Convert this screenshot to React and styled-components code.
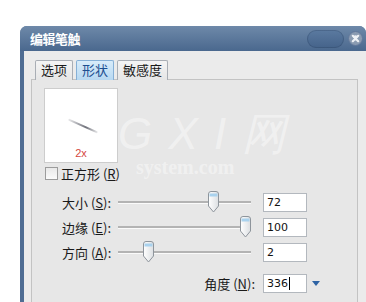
import React from 'react'
import styled, { createGlobalStyle } from 'styled-components'

const GlobalStyle = createGlobalStyle`
  html, body {
    margin: 0;
    padding: 0;
    background: #ffffff;
    overflow: hidden;
  }
  body {
    font-family: "Noto Sans CJK SC", "DejaVu Sans", sans-serif;
  }
`

const rows = [
  { label: '大小', key: 'S', value: '72', thumb: 90 },
  { label: '边缘', key: 'E', value: '100', thumb: 122 },
  { label: '方向', key: 'A', value: '2', thumb: 25 },
]

const tabs = ['选项', '形状', '敏感度']

function Thumb() {
  return (
    <svg width="11" height="22" viewBox="0 0 11 22">
      <defs>
        <linearGradient id="tg" x1="0" x2="1" y1="0" y2="0">
          <stop offset="0" stopColor="#ffffff" />
          <stop offset="1" stopColor="#dcdfe2" />
        </linearGradient>
      </defs>
      <path d="M0.5 3 Q0.5 0.5 3 0.5 H8 Q10.5 0.5 10.5 3 V15 L5.5 21 L0.5 15 Z" fill="url(#tg)" stroke="#8e959c" />
      <rect x="1.5" y="2.5" width="8" height="3" fill="#a9d2ee" />
    </svg>
  )
}

function CloseIcon() {
  return (
    <svg width="15" height="15" viewBox="0 0 15 15">
      <circle cx="7.5" cy="7.5" r="7" fill="#8a9bb1" stroke="#61779a" />
      <path d="M4.8 4.8 L10.2 10.2 M10.2 4.8 L4.8 10.2" stroke="#eef1f5" strokeWidth="2.2" strokeLinecap="round" />
      <circle cx="7.5" cy="6.2" r="2" fill="#eef1f5" />
    </svg>
  )
}

export default function App() {
  return (
    <Page>
      <GlobalStyle />
      <Window>
        <TitleBar>
          <Title>编辑笔触</Title>
          <TitleButtons>
            <Pill />
            <CloseIcon />
          </TitleButtons>
        </TitleBar>
        <Body>
          <TabStrip>
            {tabs.map((t, i) => (
              <Tab key={t} $active={i === 1}>{t}</Tab>
            ))}
          </TabStrip>
          <Panel>
            <Watermark>
              <WatermarkBig>G X I 网</WatermarkBig>
              <WatermarkSmall>system.com</WatermarkSmall>
            </Watermark>
            <Preview>
              <Stroke />
              <Scale>2x</Scale>
            </Preview>
            <CheckRow>
              <CheckBox />
              <span>正方形 (<u>R</u>)</span>
            </CheckRow>
            <Form>
              {rows.map((r, i) => (
                <Row key={r.key} $top={i === 0 ? 0 : 3}>
                  <Label>{r.label} (<u>{r.key}</u>):</Label>
                  <Track>
                    <ThumbHolder style={{ left: r.thumb }}>
                      <Thumb />
                    </ThumbHolder>
                  </Track>
                  <Field>{r.value}</Field>
                </Row>
              ))}
              <Row $top={9}>
                <AngleLabel>角度 (<u>N</u>):</AngleLabel>
                <Field>336<Caret /></Field>
                <Drop />
              </Row>
            </Form>
          </Panel>
        </Body>
      </Window>
    </Page>
  )
}

const Page = styled.div`
  width: 366px;
  height: 302px;
  padding: 26px 0 0 20px;
  box-sizing: border-box;
  background: #ffffff;
`
const Window = styled.div`
  width: 346px;
  height: 276px;
  background: #4f6d93;
  border-radius: 7px 7px 0 0;
  display: flex;
  flex-direction: column;
  overflow: hidden;
`
const TitleBar = styled.div`
  height: 25px;
  display: flex;
  align-items: center;
  justify-content: space-between;
  padding: 0 3px 0 10px;
  background: linear-gradient(#6e89a9, #4a688e);
`
const Title = styled.span`
  color: #ffffff;
  font-size: 13px;
  font-weight: 700;
  letter-spacing: -0.5px;
`
const TitleButtons = styled.div`
  display: flex;
  align-items: center;
  gap: 4px;
`
const Pill = styled.div`
  width: 37px;
  height: 18px;
  border-radius: 9px;
  background: linear-gradient(#5b7aa0, #45638a);
  box-shadow: inset 0 0 0 1px rgba(30, 50, 80, 0.25);
`
const Body = styled.div`
  flex: 1;
  margin-left: 4px;
  background: #ebebeb;
  padding: 9px 8px 0 7px;
  display: flex;
  flex-direction: column;
`
const TabStrip = styled.div`
  display: flex;
  gap: 3px;
  padding-left: 4px;
  height: 19px;
  position: relative;
  z-index: 1;
`
const Tab = styled.div`
  height: 20px;
  box-sizing: border-box;
  padding: 0 5px;
  font-size: 13px;
  line-height: 18px;
  border: 1px solid ${(p) => (p.$active ? '#86b0d6' : '#a9aeb5')};
  border-bottom: none;
  border-radius: 2px 2px 0 0;
  color: ${(p) => (p.$active ? '#1d4f91' : '#1a1a1a')};
  background: ${(p) =>
    p.$active ? 'linear-gradient(#d8ecfa, #b7d8f1)' : 'linear-gradient(#f4f4f4, #e6e6e6)'};
`
const Panel = styled.div`
  flex: 1;
  position: relative;
  border: 1px solid #c3c3c3;
  border-bottom: none;
  background: #e7e7e7;
  padding: 8px 0 0 12px;
`
const Watermark = styled.div`
  position: absolute;
  left: 86px;
  top: 30px;
  color: rgba(255, 255, 255, 0.42);
  pointer-events: none;
`
const WatermarkBig = styled.div`
  font-family: "Liberation Sans", sans-serif;
  font-style: italic;
  font-size: 44px;
  line-height: 48px;
  letter-spacing: 2px;
`
const WatermarkSmall = styled.div`
  font-family: "Liberation Serif", serif;
  font-weight: 700;
  font-size: 20px;
  line-height: 18px;
  margin-left: 18px;
`
const Preview = styled.div`
  position: relative;
  width: 74px;
  height: 75px;
  box-sizing: border-box;
  background: #ffffff;
  border: 1px solid #cdcdcd;
  display: flex;
  flex-direction: column;
  align-items: center;
  justify-content: flex-end;
`
const Stroke = styled.div`
  position: absolute;
  left: 22px;
  top: 36px;
  width: 32px;
  height: 2px;
  border-radius: 1px;
  background: linear-gradient(90deg, rgba(120, 120, 130, 0.15), #6f717a 60%, rgba(120, 120, 130, 0.15));
  transform: rotate(24deg);
`
const Scale = styled.div`
  color: #d5473f;
  font-family: "Liberation Sans", sans-serif;
  font-size: 11px;
  line-height: 13px;
  margin-bottom: 2px;
`
const CheckRow = styled.div`
  display: flex;
  align-items: center;
  gap: 3px;
  margin-top: 4px;
  height: 13px;
  font-size: 13px;
  color: #1a1a1a;
  margin-left: 1px;
`
const CheckBox = styled.div`
  width: 13px;
  height: 13px;
  box-sizing: border-box;
  border: 1px solid #9c9c9c;
  background: linear-gradient(#e9e9e9, #fbfbfb);
`
const Form = styled.div`
  margin-top: 11px;
  padding-left: 18px;
  display: flex;
  flex-direction: column;
`
const Row = styled.div`
  display: grid;
  grid-template-columns: 56px 145px 44px 20px;
  align-items: center;
  height: 22px;
  margin-top: ${(p) => p.$top}px;
`
const Label = styled.div`
  font-size: 13px;
  color: #1a1a1a;
  white-space: nowrap;
`
const AngleLabel = styled(Label)`
  grid-column: 1 / 3;
  text-align: right;
  padding-right: 8px;
`
const Track = styled.div`
  position: relative;
  width: 133px;
  height: 2px;
  background: #b3b3b3;
  border-bottom: 1px solid #fafafa;
`
const ThumbHolder = styled.div`
  position: absolute;
  top: -10px;
  line-height: 0;
`
const Field = styled.div`
  height: 19px;
  box-sizing: border-box;
  border: 1px solid #b3b8be;
  background: #ffffff;
  font-family: "DejaVu Sans", sans-serif;
  font-size: 11px;
  line-height: 17px;
  padding-left: 3px;
  color: #111;
  display: flex;
  align-items: center;
`
const Caret = styled.span`
  display: inline-block;
  width: 1px;
  height: 13px;
  background: #000;
  margin-left: 1px;
`
const Drop = styled.div`
  justify-self: start;
  width: 0;
  height: 0;
  border-left: 4px solid transparent;
  border-right: 4px solid transparent;
  border-top: 5px solid #2e63a4;
  margin-left: 5px;
`
